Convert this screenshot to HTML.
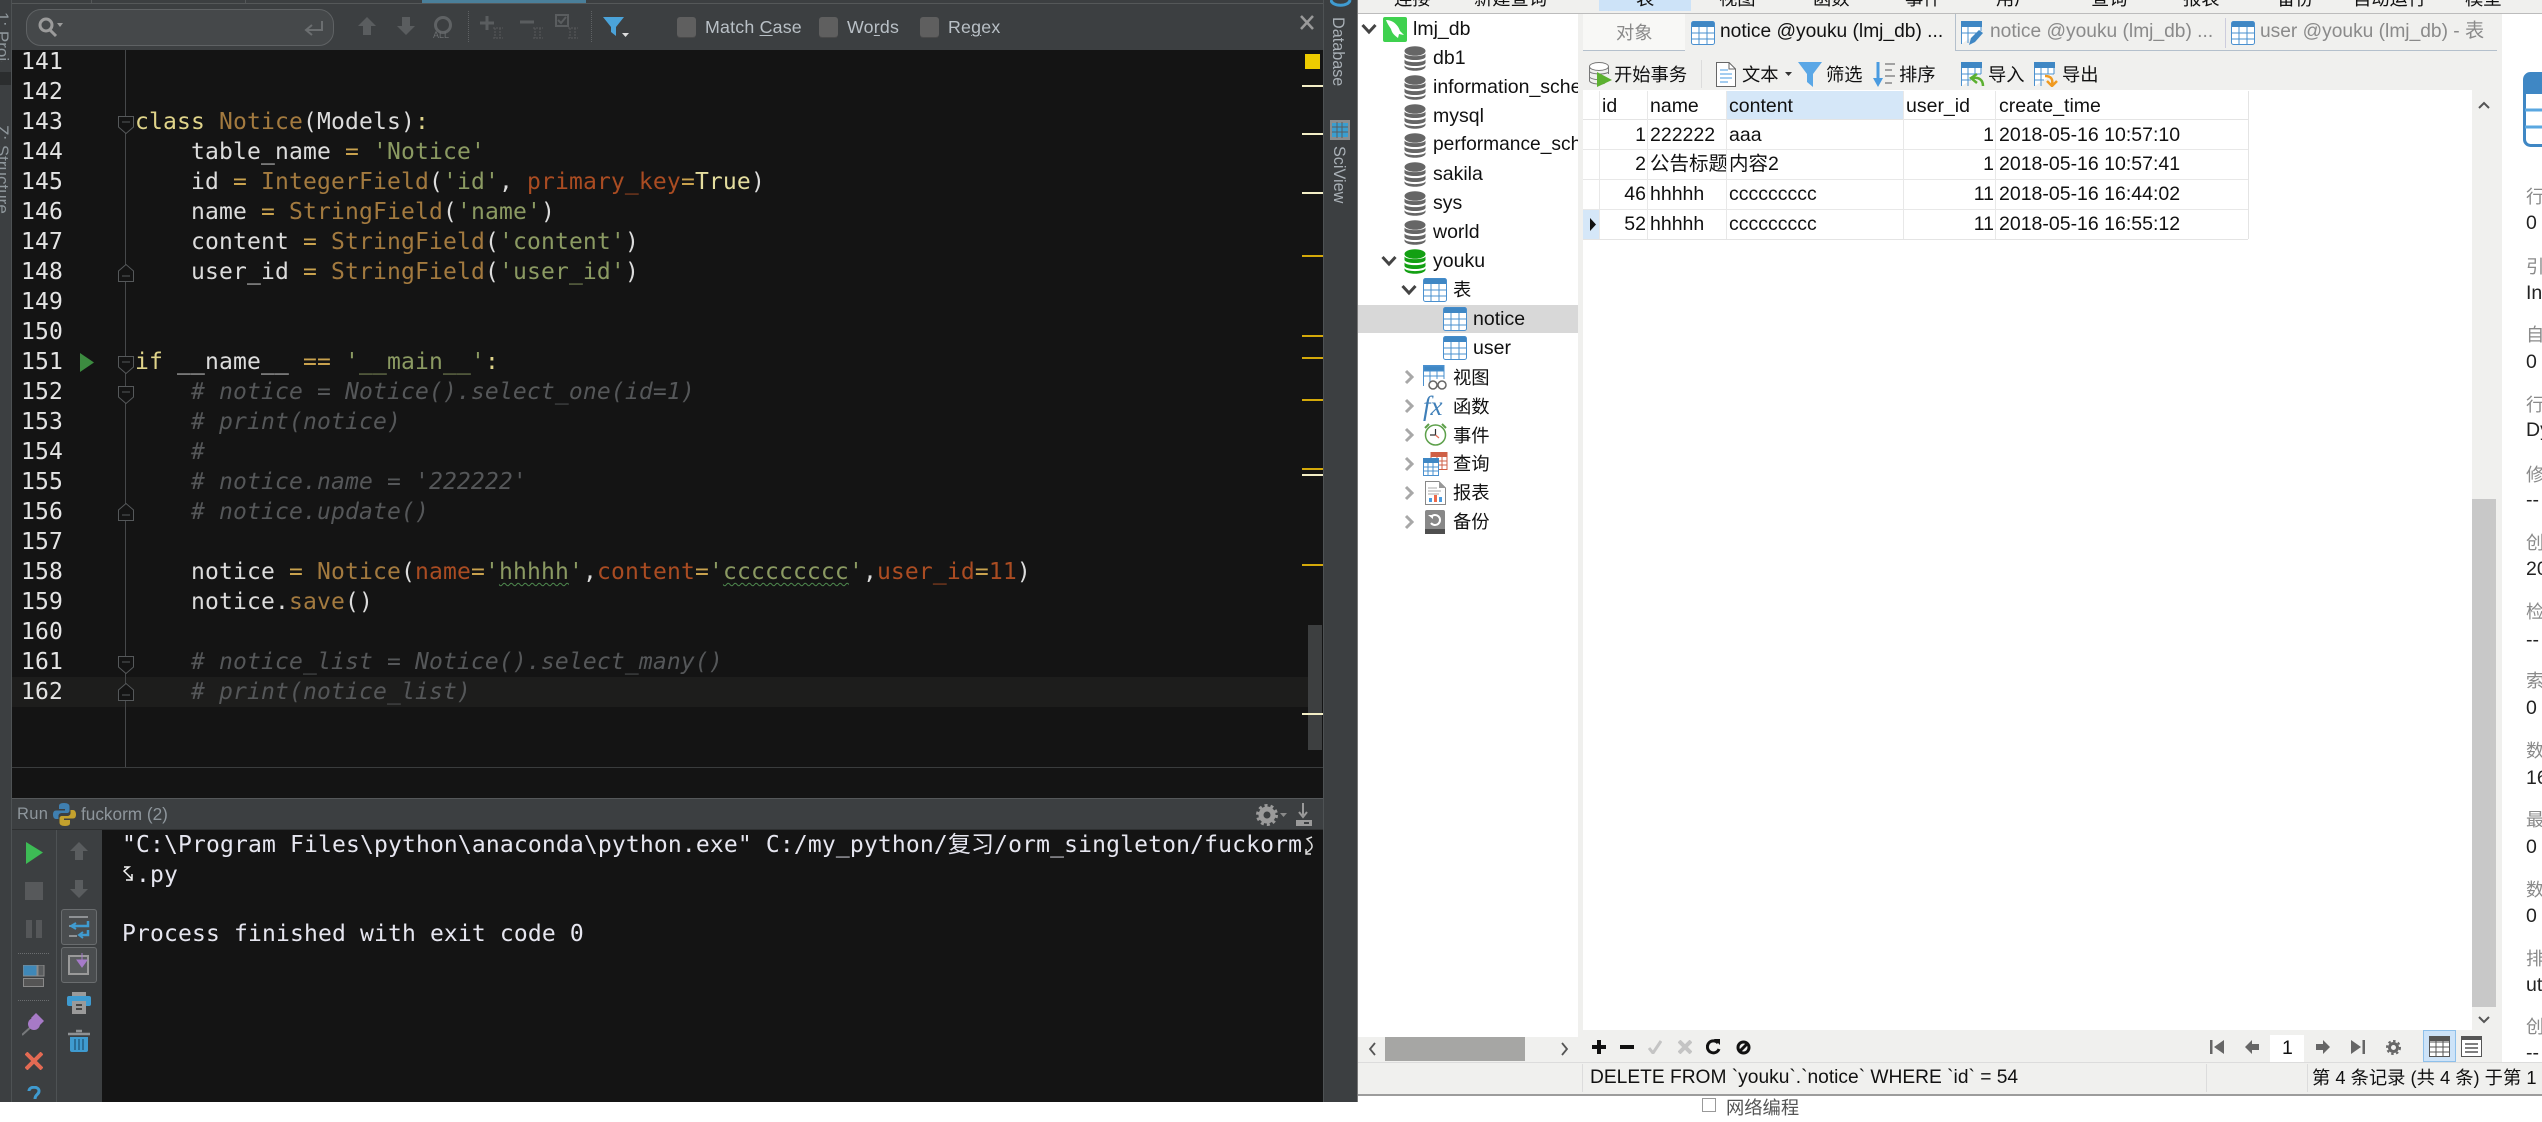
<!DOCTYPE html>
<html><head><meta charset="utf-8"><style>
html,body{margin:0;padding:0;width:2542px;height:1102px;overflow:hidden;background:#fff}
div,span.a,svg.a{position:absolute}
.a{position:absolute}
.c{left:135px;height:30px;line-height:30px;white-space:pre;font:23px/30px "DejaVu Sans Mono","Noto Sans CJK SC",monospace;letter-spacing:.15px;color:#dcdcdc}
.n{left:21px;height:30px;font:23px/30px "DejaVu Sans Mono",monospace;letter-spacing:.15px;color:#e4e4e4}
.k{color:#e0d48a}.b{color:#a37a3f}.s{color:#8b9a62}.o{color:#aa4c22}.y{color:#c9a24e}.t{color:#e4dd9e}
.m{color:#555759;font-style:italic}
.w{text-decoration:underline wavy #4f8a4f 1px;text-underline-offset:3px}
.u,.l{font-family:"Liberation Sans","Noto Sans CJK SC",sans-serif;white-space:pre}
.u{font-size:19.5px;line-height:28px;height:28px;color:#111}
.h{font-size:18.3px}
.g{color:#8a8a8a}
.i{font-family:"Liberation Sans","Noto Sans CJK SC",sans-serif;font-size:17.8px;color:#b9c0c6;line-height:24px;height:24px;top:15px;letter-spacing:.2px;white-space:pre}
.i u{text-decoration-thickness:1px;text-underline-offset:2px}
.cb{top:17px;width:19px;height:20px;background:#5f5f5f;border-radius:3px;box-shadow:0 1px 0 #4a4a4a}
.v{background:#e9e9e9}
.st{left:1302px;width:21px;height:2px;background:#d4a90a}
.st.p{background:#f3eec6}
.r{font-family:"Liberation Sans","Noto Sans CJK SC",sans-serif;font-size:19.5px;line-height:26px;height:26px;left:2526px;white-space:pre;color:#222}
.r.g{color:#8a8a8a;font-size:18.3px}
</style></head><body>
<svg width="0" height="0" style="position:absolute"><defs>
<symbol id="db" viewBox="0 0 22 25"><g fill="#666"><ellipse cx="11" cy="5" rx="10.5" ry="4.8"/><path d="M.5 7.5C2 11 20 11 21.5 7.5V11C20 15 2 15 .5 11Z"/><path d="M.5 13.5C2 17 20 17 21.5 13.5V17C20 21 2 21 .5 17Z"/><path d="M.5 19.3C2 23 20 23 21.5 19.3V21C20 26 2 26 .5 21Z"/></g></symbol>
<symbol id="dbg" viewBox="0 0 22 25"><g fill="#13a013"><ellipse cx="11" cy="5" rx="10.5" ry="4.8"/><path d="M.5 7.5C2 11 20 11 21.5 7.5V11C20 15 2 15 .5 11Z"/><path d="M.5 13.5C2 17 20 17 21.5 13.5V17C20 21 2 21 .5 17Z"/><path d="M.5 19.3C2 23 20 23 21.5 19.3V21C20 26 2 26 .5 21Z"/></g></symbol>
<symbol id="tb" viewBox="0 0 24 24"><rect x=".5" y=".5" width="23" height="23" rx="2" fill="#fff" stroke="#4a90cf"/><path d="M1 6V2q0-1.500 1.500-1.500h19Q23 .5 23 2V6Z" fill="#3f87c4"/><path d="M1 12H23M1 18H23M8 6V23M16 6V23" stroke="#4a90cf" fill="none"/></symbol>
<symbol id="ch" viewBox="0 0 16 12"><path d="M1.500 2L8 9 14.500 2" fill="none" stroke="#444" stroke-width="3"/></symbol>
<symbol id="cr" viewBox="0 0 10 16"><path d="M2 2L8 8 2 14" fill="none" stroke="#a8a8a8" stroke-width="3"/></symbol>
<symbol id="fd" viewBox="0 0 16 18"><path d="M.5.500H15.500V11L8 17.500.5 11Z" fill="#141414" stroke="#55585a"/><path d="M4 6H12" stroke="#55585a"/></symbol>
<symbol id="fu" viewBox="0 0 16 18"><path d="M.5 17.500H15.500V7L8 .5.5 7Z" fill="#141414" stroke="#55585a"/><path d="M4 12H12" stroke="#55585a"/></symbol>
</defs></svg>

<!-- left IDE background -->
<div style="left:0;top:0;width:1358px;height:1102px;background:#3c3f41"></div>
<div style="left:422px;top:0;width:164px;height:3px;background:#4a7f9a"></div>
<div style="left:12px;top:3px;width:1311px;height:1px;background:#555859"></div>
<div style="left:91px;top:0;width:1px;height:3px;background:#555859"></div>
<div style="left:245px;top:0;width:1px;height:3px;background:#555859"></div>
<div style="left:11px;top:0;width:1px;height:1102px;background:#4e5254"></div>
<div class="l" style="left:-23px;top:30px;width:50px;font-size:17px;color:#8f979c;transform:rotate(90deg);line-height:14px;height:14px;overflow:hidden">1: Project</div>
<div class="l" style="left:-53px;top:173px;width:110px;font-size:17px;color:#8f979c;transform:rotate(90deg);line-height:14px;height:14px;overflow:hidden">Z: Structure</div>
<div style="left:0;top:72px;width:11px;height:13px;background:#2b2d2e"></div>

<!-- find bar -->
<div style="left:26px;top:9px;width:306px;height:35px;background:#45484a;border:1px solid #5f6264;border-radius:15px"></div>
<svg class="a" style="left:36px;top:16px" width="30" height="22"><circle cx="10" cy="9" r="6" fill="none" stroke="#9b9b9b" stroke-width="3"/><path d="M14 14L20 20" stroke="#9b9b9b" stroke-width="3"/><path d="M21 7H27L24 11Z" fill="#9b9b9b"/></svg>
<svg class="a" style="left:304px;top:20px" width="20" height="17"><path d="M18 1V10H3M8 5L2 10 8 15" fill="none" stroke="#6b6e70" stroke-width="2"/></svg>
<svg class="a" style="left:357px;top:17px" width="20" height="19"><path d="M10 0L19 9H14V18H6V9H1Z" fill="#5a5d5f"/></svg>
<svg class="a" style="left:396px;top:17px" width="20" height="19"><path d="M10 18L19 9H14V0H6V9H1Z" fill="#5a5d5f"/></svg>
<svg class="a" style="left:432px;top:16px" width="26" height="24"><circle cx="11" cy="9" r="7.500" fill="none" stroke="#5f6264" stroke-width="3"/><text x="1" y="22" font-family="Liberation Sans" font-size="9" fill="#6b6e70">ALL</text></svg>
<div style="left:468px;top:11px;height:31px;border-left:1px dotted #5f6264"></div>
<svg class="a" style="left:480px;top:15px" width="24" height="24"><path d="M7 1V15M0 8H14" stroke="#5a5d5f" stroke-width="3"/><path d="M13 13H23M13 23H23M15 13V23M20 13V23" stroke="#57595b" stroke-dasharray="2 1"/></svg>
<svg class="a" style="left:520px;top:15px" width="24" height="24"><path d="M0 7H14" stroke="#5a5d5f" stroke-width="3"/><path d="M13 13H23M13 23H23M15 13V23M20 13V23" stroke="#57595b" stroke-dasharray="2 1"/></svg>
<svg class="a" style="left:555px;top:14px" width="24" height="25"><rect x="1" y="1" width="12" height="11" fill="none" stroke="#5a5d5f" stroke-width="2"/><path d="M3 6L6 9 11 3" fill="none" stroke="#5a5d5f" stroke-width="2"/><path d="M13 14H23M13 24H23M15 14V24M20 14V24" stroke="#57595b" stroke-dasharray="2 1"/></svg>
<div style="left:591px;top:11px;height:31px;border-left:1px dotted #5f6264"></div>
<svg class="a" style="left:603px;top:16px" width="27" height="22"><path d="M0 1H21L13 11V20L8 16V11Z" fill="#4ba3d9"/><path d="M19 17H26L22.500 21Z" fill="#ddd"/></svg>
<div class="cb" style="left:677px"></div><div class="i" style="left:705px">Match <u>C</u>ase</div>
<div class="cb" style="left:819px"></div><div class="i" style="left:847px">Wo<u>r</u>ds</div>
<div class="cb" style="left:920px"></div><div class="i" style="left:948px">Re<u>g</u>ex</div>
<svg class="a" style="left:1300px;top:15px" width="14" height="15"><path d="M1 1L13 14M13 1L1 14" stroke="#9a9a9a" stroke-width="2.500"/></svg>

<!-- editor -->
<div style="left:12px;top:50px;width:1311px;height:748px;background:#141414"></div>
<div style="left:12px;top:677px;width:1296px;height:30px;background:#1d1d1c"></div>
<div style="left:125px;top:50px;width:1px;height:717px;background:#46484a"></div>
<div style="left:12px;top:767px;width:1311px;height:1px;background:#3a3c3d"></div>
<div style="left:1308px;top:625px;width:14px;height:125px;background:#3d3f40"></div>

<svg class="a" style="left:118px;top:116px" width="16" height="18"><use href="#fd"/></svg>
<svg class="a" style="left:118px;top:264px" width="16" height="18"><use href="#fu"/></svg>
<svg class="a" style="left:118px;top:356px" width="16" height="18"><use href="#fd"/></svg>
<svg class="a" style="left:118px;top:386px" width="16" height="18"><use href="#fd"/></svg>
<svg class="a" style="left:118px;top:503px" width="16" height="18"><use href="#fu"/></svg>
<svg class="a" style="left:118px;top:656px" width="16" height="18"><use href="#fd"/></svg>
<svg class="a" style="left:118px;top:683px" width="16" height="18"><use href="#fu"/></svg>
<svg class="a" style="left:80px;top:353px" width="15" height="19"><path d="M0 0L14 9.500 0 19Z" fill="#3c8b40"/></svg>

<div class="n" style="top:47px">141</div><div class="n" style="top:77px">142</div><div class="n" style="top:107px">143</div><div class="n" style="top:137px">144</div><div class="n" style="top:167px">145</div><div class="n" style="top:197px">146</div><div class="n" style="top:227px">147</div><div class="n" style="top:257px">148</div><div class="n" style="top:287px">149</div><div class="n" style="top:317px">150</div><div class="n" style="top:347px">151</div><div class="n" style="top:377px">152</div><div class="n" style="top:407px">153</div><div class="n" style="top:437px">154</div><div class="n" style="top:467px">155</div><div class="n" style="top:497px">156</div><div class="n" style="top:527px">157</div><div class="n" style="top:557px">158</div><div class="n" style="top:587px">159</div><div class="n" style="top:617px">160</div><div class="n" style="top:647px">161</div><div class="n" style="top:677px">162</div>

<div class="c" style="top:107px"><span class="k">class</span> <span class="b">Notice</span>(Models)<span class="k">:</span></div>
<div class="c" style="top:137px">    table_name <span class="y">=</span> <span class="s">'Notice'</span></div>
<div class="c" style="top:167px">    id <span class="y">=</span> <span class="b">IntegerField</span>(<span class="s">'id'</span>, <span class="o">primary_key</span><span class="y">=</span><span class="t">True</span>)</div>
<div class="c" style="top:197px">    name <span class="y">=</span> <span class="b">StringField</span>(<span class="s">'name'</span>)</div>
<div class="c" style="top:227px">    content <span class="y">=</span> <span class="b">StringField</span>(<span class="s">'content'</span>)</div>
<div class="c" style="top:257px">    user_id <span class="y">=</span> <span class="b">StringField</span>(<span class="s">'user_id'</span>)</div>
<div class="c" style="top:347px"><span class="k">if</span> __name__ <span class="y">==</span> <span class="s">'__main__'</span><span class="k">:</span></div>
<div class="c m" style="top:377px">    # notice = Notice().select_one(id=1)</div>
<div class="c m" style="top:407px">    # print(notice)</div>
<div class="c m" style="top:437px">    #</div>
<div class="c m" style="top:467px">    # notice.name = '222222'</div>
<div class="c m" style="top:497px">    # notice.update()</div>
<div class="c" style="top:557px">    notice <span class="y">=</span> <span class="b">Notice</span>(<span class="o">name</span><span class="y">=</span><span class="s">'<span class="w">hhhhh</span>'</span>,<span class="o">content</span><span class="y">=</span><span class="s">'<span class="w">ccccccccc</span>'</span>,<span class="o">user_id</span><span class="y">=</span><span class="o">11</span>)</div>
<div class="c" style="top:587px">    notice.<span class="b">save</span>()</div>
<div class="c m" style="top:647px">    # notice_list = Notice().select_many()</div>
<div class="c m" style="top:677px">    # print(notice_list)</div>

<!-- stripes -->
<div style="left:1305px;top:54px;width:15px;height:15px;background:#eecc00"></div>
<div class="st p" style="top:85px"></div><div class="st p" style="top:133px"></div><div class="st p" style="top:192px"></div>
<div class="st" style="top:255px"></div><div class="st" style="top:335px"></div><div class="st" style="top:357px"></div><div class="st" style="top:399px"></div><div class="st" style="top:468px"></div><div class="st p" style="top:474px"></div><div class="st" style="top:564px"></div><div class="st p" style="top:713px"></div>

<!-- run panel -->
<div style="left:12px;top:798px;width:1311px;height:1px;background:#55585a"></div>
<div class="l" style="left:17px;top:800px;line-height:28px;font-size:16.5px;letter-spacing:.3px;color:#8e969c">Run</div>
<svg class="a" style="left:53px;top:803px" width="23" height="23" viewBox="0 0 23 23"><path d="M11 0C6 0 6 2 6 3.500V6H12V7.500H3C1 7.500 0 9 0 11.500S1 16 3 16H5.500V13C5.500 11 7 10 9 10H14C15.500 10 16.500 9 16.500 7.500V3.500C16.500 1.500 15 0 11 0Z" fill="#3f7fb0"/><path d="M12 23C17 23 17 21 17 19.500V17H11V15.500H20C22 15.500 23 14 23 11.500S22 7 20 7H17.500V10C17.500 12 16 13 14 13H9C7.500 13 6.500 14 6.500 15.500V19.500C6.500 21.500 8 23 12 23Z" fill="#c3a12d"/></svg>
<div class="l" style="left:81px;top:800px;line-height:28px;font-size:17.2px;color:#8e969c">fuckorm (2)</div>
<svg class="a" style="left:1256px;top:804px" width="34" height="22"><circle cx="11" cy="11" r="6" fill="none" stroke="#9a9a9a" stroke-width="5"/><circle cx="11" cy="11" r="9.500" fill="none" stroke="#9a9a9a" stroke-width="3" stroke-dasharray="3 3"/><path d="M24 9H31L27.500 13Z" fill="#8a8a8a"/></svg>
<svg class="a" style="left:1294px;top:803px" width="20" height="24"><path d="M9 0V12M5 9L9 14 13 9" fill="none" stroke="#9a9a9a" stroke-width="2"/><rect x="2" y="17" width="16" height="6" fill="#9a9a9a"/><rect x="10" y="19" width="5" height="2" fill="#3c3f41"/></svg>
<div style="left:12px;top:829px;width:1311px;height:1px;background:#2e3031"></div>
<div style="left:56px;top:830px;width:1px;height:272px;background:#4e5254"></div>
<div style="left:102px;top:830px;width:1221px;height:272px;background:#141414"></div>
<svg class="a" style="left:26px;top:842px" width="18" height="22"><path d="M0 0L17 10.500 0 22Z" fill="#3dbb55"/></svg>
<div style="left:25px;top:882px;width:18px;height:18px;background:#57595b"></div>
<div style="left:26px;top:920px;width:6px;height:18px;background:#555759"></div><div style="left:36px;top:920px;width:6px;height:18px;background:#555759"></div>
<div style="left:18px;top:953px;height:1px;width:31px;border-top:1px dotted #6b6e70"></div>
<svg class="a" style="left:23px;top:965px" width="22" height="22"><rect x="0" y="0" width="14" height="11" fill="#3f88b8" stroke="#8a8a8a"/><rect x="15" y="0" width="6" height="11" fill="#5a5d5f" stroke="#8a8a8a"/><rect x=".5" y="13.500" width="20" height="8" fill="#555" stroke="#8a8a8a"/></svg>
<div style="left:18px;top:1000px;height:1px;width:31px;border-top:1px dotted #6b6e70"></div>
<svg class="a" style="left:22px;top:1012px" width="24" height="24"><path d="M0 23L11 13" stroke="#77797b" stroke-width="2"/><circle cx="12" cy="12" r="6" fill="#a77ac7"/><path d="M9 6L14 1 22 9 17 14Z" fill="#a77ac7"/></svg>
<svg class="a" style="left:25px;top:1052px" width="18" height="18"><path d="M1 1L17 17M17 1L1 17" stroke="#e36a53" stroke-width="4"/></svg>
<svg class="a" style="left:27px;top:1086px" width="16" height="16"><path d="M2 5C2 0 12 0 12 5 12 9 8 8 8 13" fill="none" stroke="#3f9bd0" stroke-width="3"/></svg>
<svg class="a" style="left:69px;top:842px" width="20" height="19"><path d="M10 0L19 9H14V18H6V9H1Z" fill="#5a5d5f"/></svg>
<svg class="a" style="left:69px;top:880px" width="20" height="19"><path d="M10 18L19 9H14V0H6V9H1Z" fill="#5a5d5f"/></svg>
<div style="left:61px;top:909px;width:34px;height:34px;background:#4a4d4f;border:1px solid #6a6d6f;border-radius:3px"></div>
<svg class="a" style="left:68px;top:915px" width="22" height="24"><path d="M1 2H20M1 11H9M1 21H9" stroke="#8f9295" stroke-width="2"/><path d="M20 6V11H4M20 15V20H12" fill="none" stroke="#3f9bd0" stroke-width="2.500"/><path d="M8 8L3 11 8 14M15 17L11 20 15 23" fill="none" stroke="#3f9bd0" stroke-width="2"/></svg>
<div style="left:61px;top:947px;width:34px;height:34px;background:#4a4d4f;border:1px solid #6a6d6f;border-radius:3px"></div>
<svg class="a" style="left:68px;top:953px" width="22" height="22"><rect x="1" y="3" width="19" height="18" fill="#5a5d5f" stroke="#9a9a9a" stroke-width="2"/><path d="M14 0V10M9 7L14 14 19 7Z" fill="#a67ac9" stroke="#a67ac9"/></svg>
<svg class="a" style="left:67px;top:992px" width="24" height="22"><rect x="5" y="0" width="14" height="4" fill="#9a9a9a"/><rect x="0" y="4" width="24" height="10" rx="2" fill="#3f9bd0"/><rect x="5" y="9" width="14" height="13" fill="#9a9a9a"/><path d="M9 13H15M9 17H15" stroke="#444" stroke-width="2"/></svg>
<svg class="a" style="left:68px;top:1029px" width="22" height="24"><path d="M8 2H14M0 5H22" stroke="#8f9295" stroke-width="2.500"/><path d="M2 8H20V21Q20 23 18 23H4Q2 23 2 21Z" fill="#3f9bd0"/><path d="M7 10V21M11 10V21M15 10V21" stroke="#245f85" stroke-width="1.500"/></svg>

<div class="c" style="left:122px;top:830px;color:#e6e6f0">"C:\Program Files\python\anaconda\python.exe" C:/my_python/复习/orm_singleton/fuckorm</div>
<svg class="a" style="left:1304px;top:836px" width="11" height="20"><path d="M8 1L3 3 7 7" fill="none" stroke="#ddd" stroke-width="1.500"/><path d="M7 7C10 12 6 14 2 17M2 13V18H7" fill="none" stroke="#ddd" stroke-width="1.500"/></svg>
<svg class="a" style="left:122px;top:866px" width="13" height="16"><path d="M2 1H7L2 5 10 13M10 8V14H4" fill="none" stroke="#f4f4f4" stroke-width="1.500"/></svg>
<div class="c" style="left:122px;top:860px;color:#e6e6f0"> .py</div>
<div class="c" style="left:122px;top:919px;color:#e6e6f0">Process finished with exit code 0</div>

<!-- right tool strip -->
<div style="left:1323px;top:0;width:1px;height:1102px;background:#4e5254"></div>
<svg class="a" style="left:1330px;top:0" width="22" height="9"><path d="M1 0C2 7 19 7 20 0" fill="none" stroke="#3f9bd0" stroke-width="3"/></svg>
<div class="l" style="left:1306px;top:38px;width:64px;height:22px;line-height:22px;font-size:16.2px;color:#aab1b7;transform:rotate(90deg);text-align:center">Database</div>
<svg class="a" style="left:1330px;top:120px" width="20" height="20"><rect width="20" height="20" fill="#8a8d8f"/><path d="M2 3H18V17H2Z" fill="#3a9ed0"/><path d="M7 2V18M12 2V18M2 7H18M2 12H18" stroke="#5a5d5f"/></svg>
<div class="l" style="left:1312px;top:162px;width:54px;height:22px;line-height:22px;font-size:16.2px;color:#aab1b7;transform:rotate(90deg);text-align:center">SciView</div>
<div style="left:1357px;top:0;width:1px;height:1102px;background:#777"></div>

<!-- navicat -->
<div style="left:1358px;top:0;width:1184px;height:1102px;background:#f0f0ee"></div>
<div style="left:1358px;top:13px;width:1184px;height:1px;background:#bcbcbc"></div>
<div style="left:1599px;top:0;width:92px;height:11px;background:#cde3f8"></div>
<div class="u h" style="left:1394px;top:-15px">连接</div><div class="u h" style="left:1474px;top:-15px">新建查询</div><div class="u h" style="left:1636px;top:-15px">表</div><div class="u h" style="left:1719px;top:-15px">视图</div><div class="u h" style="left:1813px;top:-15px">函数</div><div class="u h" style="left:1905px;top:-15px">事件</div><div class="u h" style="left:1996px;top:-15px">用户</div><div class="u h" style="left:2091px;top:-15px">查询</div><div class="u h" style="left:2183px;top:-15px">报表</div><div class="u h" style="left:2277px;top:-15px">备份</div><div class="u h" style="left:2353px;top:-15px">自动运行</div><div class="u h" style="left:2465px;top:-15px">模型</div>

<!-- tree -->
<div style="left:1358px;top:14px;width:220px;height:1023px;background:#fff"></div>
<div style="left:1358px;top:305px;width:220px;height:28px;background:#d8d8d8"></div>
<svg class="a" style="left:1361px;top:23px" width="16" height="12"><use href="#ch"/></svg>
<svg class="a" style="left:1383px;top:17px" width="24" height="25"><rect width="24" height="25" rx="2" fill="#3fd14f"/><path d="M3 3C10 3 15 8 17 14L21 18 16 17 15 21C11 18 9 16 8 12 6 9 4 6 3 3Z" fill="#fff"/></svg>
<div class="u" style="left:1413px;top:15px">lmj_db</div>
<svg class="a" style="left:1404px;top:46px" width="22" height="25"><use href="#db"/></svg><div class="u" style="left:1433px;top:44px">db1</div>
<svg class="a" style="left:1404px;top:75px" width="22" height="25"><use href="#db"/></svg><div class="u" style="left:1433px;top:73px;width:145px;overflow:hidden">information_schema</div>
<svg class="a" style="left:1404px;top:104px" width="22" height="25"><use href="#db"/></svg><div class="u" style="left:1433px;top:102px">mysql</div>
<svg class="a" style="left:1404px;top:133px" width="22" height="25"><use href="#db"/></svg><div class="u" style="left:1433px;top:131px;width:145px;overflow:hidden;font-size:19.2px">performance_schema</div>
<svg class="a" style="left:1404px;top:162px" width="22" height="25"><use href="#db"/></svg><div class="u" style="left:1433px;top:160px">sakila</div>
<svg class="a" style="left:1404px;top:191px" width="22" height="25"><use href="#db"/></svg><div class="u" style="left:1433px;top:189px">sys</div>
<svg class="a" style="left:1404px;top:220px" width="22" height="25"><use href="#db"/></svg><div class="u" style="left:1433px;top:218px">world</div>
<svg class="a" style="left:1381px;top:255px" width="16" height="12"><use href="#ch"/></svg>
<svg class="a" style="left:1404px;top:249px" width="22" height="25"><use href="#dbg"/></svg><div class="u" style="left:1433px;top:247px">youku</div>
<svg class="a" style="left:1401px;top:284px" width="16" height="12"><use href="#ch"/></svg>
<svg class="a" style="left:1423px;top:278px" width="24" height="24"><use href="#tb"/></svg><div class="u h" style="left:1453px;top:276px">表</div>
<svg class="a" style="left:1443px;top:307px" width="24" height="24"><use href="#tb"/></svg><div class="u" style="left:1473px;top:305px">notice</div>
<svg class="a" style="left:1443px;top:336px" width="24" height="24"><use href="#tb"/></svg><div class="u" style="left:1473px;top:334px">user</div>
<svg class="a" style="left:1404px;top:369px" width="10" height="16"><use href="#cr"/></svg>
<svg class="a" style="left:1404px;top:398px" width="10" height="16"><use href="#cr"/></svg>
<svg class="a" style="left:1404px;top:427px" width="10" height="16"><use href="#cr"/></svg>
<svg class="a" style="left:1404px;top:456px" width="10" height="16"><use href="#cr"/></svg>
<svg class="a" style="left:1404px;top:485px" width="10" height="16"><use href="#cr"/></svg>
<svg class="a" style="left:1404px;top:514px" width="10" height="16"><use href="#cr"/></svg>
<svg class="a" style="left:1423px;top:365px" width="25" height="25"><path d="M.5 21V.5H21V14" fill="#fff" stroke="#4a90cf"/><path d="M1 1H21V6H1ZM1 11H21M7 6V20M14 6V14" fill="#3f87c4" stroke="#4a90cf"/><circle cx="10" cy="20" r="4" fill="#fff" stroke="#666" stroke-width="1.500"/><circle cx="19" cy="20" r="4" fill="#fff" stroke="#666" stroke-width="1.500"/></svg>
<div class="l" style="left:1423px;top:392px;font:italic 27px/28px 'Liberation Serif',serif;color:#3f7fb8">fx</div>
<svg class="a" style="left:1424px;top:423px" width="23" height="24"><circle cx="11.500" cy="12" r="10" fill="#fff" stroke="#5da04a" stroke-width="1.500"/><path d="M1 5L5 1M22 5L18 1" stroke="#5da04a" stroke-width="2"/><path d="M11.500 6V12H6" fill="none" stroke="#333" stroke-width="1.200"/><path d="M11.500 12L15 15" stroke="#e36a53" stroke-width="1.200"/></svg>
<svg class="a" style="left:1423px;top:452px" width="25" height="24"><rect x="8" y=".5" width="16" height="17" fill="#fff" stroke="#cf5f45"/><rect x="8" y="0" width="16" height="5" fill="#cf5f45"/><path d="M8 9H24M8 13H24M14 5V17M19 5V17" stroke="#cf5f45"/><rect x=".5" y="6.500" width="15" height="17" fill="#fff" stroke="#4a90cf"/><rect x="0" y="6" width="16" height="5" fill="#3f87c4"/><path d="M0 15H16M0 19H16M5 11V23M10 11V23" stroke="#4a90cf"/></svg>
<svg class="a" style="left:1425px;top:481px" width="21" height="24"><path d="M.5.500H14L20.500 7V23.500H.5Z" fill="#fff" stroke="#888"/><path d="M14 .5V7H20.500Z" fill="#999"/><path d="M3 7H12M3 10H16M3 13H14" stroke="#aaa"/><rect x="4" y="17" width="3" height="4" fill="#4a9be0"/><rect x="9" y="14" width="3" height="7" fill="#ee6a4a"/><rect x="14" y="16" width="3" height="5" fill="#4a9be0"/></svg>
<svg class="a" style="left:1425px;top:510px" width="20" height="24"><rect width="20" height="24" rx="2" fill="#888"/><rect y="19" width="20" height="5" fill="#4f4f4f"/><path d="M6 7A5 5 0 1 1 6 13" fill="none" stroke="#fff" stroke-width="2"/><path d="M3 5H8V9Z" fill="#fff"/></svg>
<div class="u h" style="left:1453px;top:364px">视图</div><div class="u h" style="left:1453px;top:393px">函数</div><div class="u h" style="left:1453px;top:422px">事件</div><div class="u h" style="left:1453px;top:450px">查询</div><div class="u h" style="left:1453px;top:479px">报表</div><div class="u h" style="left:1453px;top:508px">备份</div>

<!-- tabs -->
<div style="left:1583px;top:14px;width:102px;height:36px;background:#f8f8f6"></div>
<div style="left:1583px;top:50px;width:102px;height:1px;background:#b4c0cc"></div>
<div style="left:1955px;top:50px;width:542px;height:1px;background:#b4c0cc"></div>
<div style="left:1955px;top:14px;width:1px;height:36px;background:#b4c0cc"></div>
<div style="left:2225px;top:18px;width:1px;height:30px;background:#ccd"></div>
<div class="u h g" style="left:1616px;top:19px">对象</div>
<svg class="a" style="left:1691px;top:21px" width="24" height="24"><use href="#tb"/></svg>
<div class="u" style="left:1720px;top:18px;font-size:19.2px">notice @youku (lmj_db) ...</div>
<svg class="a" style="left:1961px;top:21px" width="24" height="25"><path d="M.5 23V.5H20V10" fill="#fff" stroke="#4a90cf"/><rect x="0" y="0" width="21" height="6" fill="#3f87c4"/><path d="M1 12H20M7 6V22" stroke="#4a90cf"/><path d="M8 24L10 17 18 9 22 12 14 21Z" fill="#3f87c4"/></svg>
<div class="u g" style="left:1990px;top:18px;font-size:19.2px">notice @youku (lmj_db) ...</div>
<svg class="a" style="left:2231px;top:21px" width="24" height="24"><use href="#tb"/></svg>
<div class="u g" style="left:2260px;top:18px;font-size:19.2px">user @youku (lmj_db) - 表</div>

<!-- toolbar -->
<svg class="a" style="left:1589px;top:62px" width="24" height="25"><ellipse cx="10" cy="4.500" rx="9.500" ry="4" fill="#fff" stroke="#777"/><path d="M.5 4.500V19C2 22 12 23 16 21M19.500 4.500V12M.5 9.500C2 12 14 13 19 10.500M.5 15C2 17 8 18 11 17.500" fill="none" stroke="#777"/><path d="M8 10L23 18 8 25Z" fill="#5cb030"/></svg>
<div class="u h" style="left:1614px;top:61px">开始事务</div>
<div style="left:1701px;top:60px;width:1px;height:28px;background:#dcdcdc"></div>
<svg class="a" style="left:1716px;top:62px" width="20" height="25"><path d="M.5.500H13L19.500 7V24.500H.5Z" fill="#fff" stroke="#666"/><path d="M13 .5V7H19.500" fill="none" stroke="#666"/><path d="M4 8H12M4 12H16M4 16H16M4 20H12" stroke="#4a9be0"/></svg>
<div class="u h" style="left:1742px;top:61px">文本</div>
<svg class="a" style="left:1785px;top:72px" width="7" height="5"><path d="M0 0H7L3.500 4Z" fill="#333"/></svg>
<svg class="a" style="left:1798px;top:62px" width="24" height="25"><path d="M0 0H24L15 12V25L9 20V12Z" fill="#5aa7e6"/></svg>
<div class="u h" style="left:1826px;top:61px">筛选</div>
<svg class="a" style="left:1873px;top:62px" width="24" height="25"><path d="M5 0V18" stroke="#4a9be0" stroke-width="3"/><path d="M0 16H10L5 25Z" fill="#4a9be0"/><path d="M12 2H22M12 8H19M12 14H22M12 21H19" stroke="#888" stroke-width="1.500"/></svg>
<div class="u h" style="left:1899px;top:61px">排序</div>
<svg class="a" style="left:1961px;top:62px" width="24" height="25"><path d="M.5 24V.5H20V12" fill="#fff" stroke="#4a90cf"/><rect width="21" height="6" fill="#3f87c4"/><path d="M1 12H20M1 18H10M7 6V24M14 6V12" stroke="#4a90cf"/><path d="M22 24C22 18 18 15 12 16M16 12L10 16 16 21" fill="none" stroke="#5cb030" stroke-width="2.500"/></svg>
<div class="u h" style="left:1988px;top:61px">导入</div>
<svg class="a" style="left:2034px;top:62px" width="24" height="25"><path d="M.5 24V.5H20V12" fill="#fff" stroke="#4a90cf"/><rect width="21" height="6" fill="#3f87c4"/><path d="M1 12H20M1 18H10M7 6V24M14 6V12" stroke="#4a90cf"/><path d="M11 14C18 14 19 18 18 23M13 19L18 24 23 19" fill="none" stroke="#f09a20" stroke-width="2.500"/></svg>
<div class="u h" style="left:2062px;top:61px">导出</div>

<!-- grid -->
<div style="left:1583px;top:90px;width:889px;height:940px;background:#fff"></div>
<div style="left:1726px;top:91px;width:177px;height:28px;background:#d5e7f8"></div>
<div style="left:1583px;top:210px;width:16px;height:29px;background:#d5e7f8"></div>
<svg class="a" style="left:1590px;top:218px" width="7" height="13"><path d="M0 0L6 6.500 0 13Z" fill="#111"/></svg>
<div style="left:1583px;top:119px;width:665px;height:1px;background:#e4e4e4"></div>
<div style="left:1583px;top:149px;width:665px;height:1px;background:#e8e8e8"></div>
<div style="left:1583px;top:179px;width:665px;height:1px;background:#e8e8e8"></div>
<div style="left:1583px;top:209px;width:665px;height:1px;background:#e8e8e8"></div>
<div style="left:1583px;top:239px;width:665px;height:1px;background:#e4e4e4"></div>
<div style="left:1599px;top:91px;width:1px;height:148px;background:#e8e8e8"></div>
<div style="left:1647px;top:91px;width:1px;height:148px;background:#e8e8e8"></div>
<div style="left:1726px;top:91px;width:1px;height:148px;background:#e8e8e8"></div>
<div style="left:1903px;top:91px;width:1px;height:148px;background:#e8e8e8"></div>
<div style="left:1995px;top:91px;width:1px;height:148px;background:#e8e8e8"></div>
<div style="left:2248px;top:91px;width:1px;height:148px;background:#e4e4e4"></div>
<div class="u" style="left:1602px;top:92px">id</div><div class="u" style="left:1650px;top:92px">name</div><div class="u" style="left:1729px;top:92px">content</div><div class="u" style="left:1906px;top:92px">user_id</div><div class="u" style="left:1999px;top:92px">create_time</div>

<div class="u" style="left:1600px;width:46px;text-align:right;top:121px">1</div><div class="u" style="left:1650px;top:121px">222222</div><div class="u" style="left:1729px;top:121px">aaa</div><div class="u" style="left:1950px;width:44px;text-align:right;top:121px">1</div><div class="u" style="left:1999px;top:121px">2018-05-16 10:57:10</div>
<div class="u" style="left:1600px;width:46px;text-align:right;top:150px">2</div><div class="u" style="left:1650px;top:150px;width:76px;overflow:hidden">公告标题2</div><div class="u" style="left:1729px;top:150px">内容2</div><div class="u" style="left:1950px;width:44px;text-align:right;top:150px">1</div><div class="u" style="left:1999px;top:150px">2018-05-16 10:57:41</div>
<div class="u" style="left:1600px;width:46px;text-align:right;top:180px">46</div><div class="u" style="left:1650px;top:180px">hhhhh</div><div class="u" style="left:1729px;top:180px">ccccccccc</div><div class="u" style="left:1950px;width:44px;text-align:right;top:180px">11</div><div class="u" style="left:1999px;top:180px">2018-05-16 16:44:02</div>
<div class="u" style="left:1600px;width:46px;text-align:right;top:210px">52</div><div class="u" style="left:1650px;top:210px">hhhhh</div><div class="u" style="left:1729px;top:210px">ccccccccc</div><div class="u" style="left:1950px;width:44px;text-align:right;top:210px">11</div><div class="u" style="left:1999px;top:210px">2018-05-16 16:55:12</div>

<!-- grid scrollbar -->
<div style="left:2472px;top:499px;width:24px;height:508px;background:#c8c8c8"></div>
<svg class="a" style="left:2478px;top:101px" width="12" height="8"><path d="M1 7L6 2 11 7" fill="none" stroke="#555" stroke-width="2"/></svg>
<svg class="a" style="left:2478px;top:1016px" width="12" height="8"><path d="M1 1L6 6 11 1" fill="none" stroke="#555" stroke-width="2"/></svg>

<!-- right panel -->
<div style="left:2502px;top:14px;width:40px;height:1048px;background:#fff"></div>
<svg class="a" style="left:2523px;top:72px" width="40" height="75"><rect x="1.500" y="1.500" width="37" height="72" rx="6" fill="#fff" stroke="#3f87c4" stroke-width="3"/><path d="M2 22V6Q2 2 6 2H34V22Z" fill="#3f87c4"/><path d="M2 38H38" stroke="#5aa7e0" stroke-width="3"/><path d="M2 55H38" stroke="#5aa7e0" stroke-width="3"/></svg>
<div class="r g" style="top:184px">行数</div><div class="r" style="top:210px">0</div>
<div class="r g" style="top:254px">引擎</div><div class="r" style="top:280px">InnoDB</div>
<div class="r g" style="top:322px">自动递增</div><div class="r" style="top:349px">0</div>
<div class="r g" style="top:392px">行格式</div><div class="r" style="top:417px">Dynamic</div>
<div class="r g" style="top:462px">修改日期</div><div class="r" style="top:487px">--</div>
<div class="r g" style="top:530px">创建日期</div><div class="r" style="top:556px">2018-05-16</div>
<div class="r g" style="top:599px">检查时间</div><div class="r" style="top:627px">--</div>
<div class="r g" style="top:668px">索引长度</div><div class="r" style="top:695px">0</div>
<div class="r g" style="top:738px">数据长度</div><div class="r" style="top:765px">16.00 KB</div>
<div class="r g" style="top:807px">最大数据长度</div><div class="r" style="top:834px">0</div>
<div class="r g" style="top:877px">数据可用空间</div><div class="r" style="top:903px">0</div>
<div class="r g" style="top:946px">排序规则</div><div class="r" style="top:972px">utf8</div>
<div class="r g" style="top:1014px">创建选项</div><div class="r" style="top:1040px">--</div>

<!-- bottom controls -->
<div style="left:1385px;top:1037px;width:140px;height:24px;background:#a6a6a4"></div>
<svg class="a" style="left:1368px;top:1042px" width="9" height="14"><path d="M7 1L2 7 7 13" fill="none" stroke="#555" stroke-width="1.800"/></svg>
<svg class="a" style="left:1560px;top:1042px" width="9" height="14"><path d="M2 1L7 7 2 13" fill="none" stroke="#555" stroke-width="1.800"/></svg>
<svg class="a" style="left:1592px;top:1040px" width="14" height="14"><path d="M7 0V14M0 7H14" stroke="#111" stroke-width="4"/></svg>
<svg class="a" style="left:1620px;top:1040px" width="14" height="14"><path d="M0 7H14" stroke="#111" stroke-width="4"/></svg>
<svg class="a" style="left:1648px;top:1040px" width="14" height="14"><path d="M1 8L5 13 13 1" fill="none" stroke="#c4c4c4" stroke-width="3"/></svg>
<svg class="a" style="left:1678px;top:1040px" width="14" height="14"><path d="M1 1L13 13M13 1L1 13" stroke="#c4c4c4" stroke-width="4"/></svg>
<svg class="a" style="left:1706px;top:1039px" width="15" height="16"><path d="M12 4A6 6 0 1 0 13 10" fill="none" stroke="#111" stroke-width="3"/><path d="M8 0H14V6Z" fill="#111"/></svg>
<svg class="a" style="left:1736px;top:1040px" width="15" height="15"><circle cx="7.500" cy="7.500" r="5.500" fill="none" stroke="#111" stroke-width="3"/><path d="M3 12L12 3" stroke="#111" stroke-width="3"/></svg>
<svg class="a" style="left:2210px;top:1040px" width="16" height="14"><path d="M1 0V14" stroke="#666" stroke-width="3"/><path d="M14 0V14L4 7Z" fill="#666"/></svg>
<svg class="a" style="left:2245px;top:1040px" width="14" height="14"><path d="M7 0V4H14V10H7V14L0 7Z" fill="#666"/></svg>
<div style="left:2270px;top:1035px;width:34px;height:27px;background:#fff"></div>
<div class="u" style="left:2282px;top:1034px">1</div>
<svg class="a" style="left:2316px;top:1040px" width="14" height="14"><path d="M7 0V4H0V10H7V14L14 7Z" fill="#666"/></svg>
<svg class="a" style="left:2349px;top:1040px" width="16" height="14"><path d="M15 0V14" stroke="#666" stroke-width="3"/><path d="M2 0V14L12 7Z" fill="#666"/></svg>
<svg class="a" style="left:2386px;top:1040px" width="15" height="15"><circle cx="7.500" cy="7.500" r="4" fill="none" stroke="#666" stroke-width="3"/><circle cx="7.500" cy="7.500" r="6.500" fill="none" stroke="#666" stroke-width="2" stroke-dasharray="2.500 2.500"/></svg>
<div style="left:2423px;top:1030px;width:31px;height:30px;background:#cde3f8;border:1px solid #8ec0ea"></div>
<svg class="a" style="left:2429px;top:1036px" width="21" height="21"><rect x=".5" y=".5" width="20" height="20" fill="#fff" stroke="#555"/><path d="M1 6H20M1 11H20M1 16H20M7 1V20M14 1V20" stroke="#555"/><rect x="1" y="1" width="19" height="4" fill="#555"/></svg>
<svg class="a" style="left:2461px;top:1036px" width="21" height="21"><rect x=".5" y=".5" width="20" height="20" fill="#fff" stroke="#555"/><rect x="1" y="1" width="19" height="3" fill="#555"/><path d="M4 8H17M4 12H17M4 16H17" stroke="#555" stroke-width="1.500"/></svg>

<!-- status -->
<div style="left:1358px;top:1062px;width:1184px;height:1px;background:#dcdcdc"></div>
<div style="left:1582px;top:1064px;width:1px;height:28px;background:#dcdcdc"></div>
<div style="left:2206px;top:1064px;width:1px;height:28px;background:#dcdcdc"></div>
<div style="left:2307px;top:1064px;width:1px;height:28px;background:#dcdcdc"></div>
<div class="u" style="left:1590px;top:1064px;font-size:19.2px">DELETE FROM `youku`.`notice` WHERE `id` = 54</div>
<div class="u" style="left:2312px;top:1064px;font-size:18.3px">第 4 条记录 (共 4 条) 于第 1 页</div>
<div style="left:1358px;top:1094px;width:1184px;height:2px;background:#9c9c9c"></div>
<div style="left:1358px;top:1096px;width:1184px;height:6px;background:#fff"></div>
<div style="left:1702px;top:1098px;width:12px;height:12px;border:1px solid #999;background:#fff"></div>
<div class="u h" style="left:1726px;top:1094px;color:#555">网络编程</div>
</body></html>
